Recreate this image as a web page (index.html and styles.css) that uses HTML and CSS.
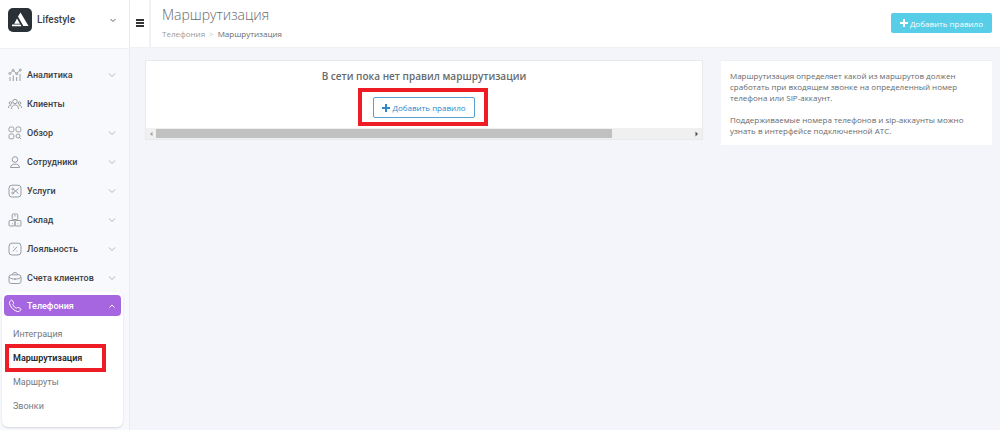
FILE: index.html
```html
<!DOCTYPE html>
<html lang="ru">
<head>
<meta charset="utf-8">
<meta name="viewport" content="width=device-width, initial-scale=1">
<title>Маршрутизация</title>
<link rel="stylesheet" href="styles.css">
</head>
<body>
<div class="app">
  <aside class="sidebar">
    <button class="account" type="button">
      <svg class="logo" viewBox="0 0 24 24"><rect width="24" height="24" rx="5" fill="#293036"/><path d="M12.500 4.500L20.500 18h-5.200L10 8.500z" fill="#fff"/><path d="M9 10.500L12 15.800H6.200zM4 16.600h8.500l1 1.600H4z" fill="#fff"/></svg>
      <span class="account-name">Lifestyle</span>
      <svg class="chevron" viewBox="0 0 8 8"><path d="M1.500 3L4 5.500L6.500 3"/></svg>
    </button>
    <nav class="menu">
      <a class="item" href="#"><svg class="icon" viewBox="0 0 14 14"><path d="M2 9v4M5.300 7.500V13M8.700 9v4M12 6v7M2.700 4.800L4.500 3M6 3.200L8 5.200M9.300 5L11.500 2.800"/><circle cx="1.800" cy="5.500" r="1"/><circle cx="5.200" cy="2.400" r="1"/><circle cx="8.700" cy="5.800" r="1"/><circle cx="12.300" cy="2" r="1"/></svg><span>Аналитика</span><svg class="chevron" viewBox="0 0 8 8"><path d="M1 2.500L4 5.500L7 2.500"/></svg></a>
      <a class="item" href="#"><svg class="icon" viewBox="0 0 14 14"><circle cx="7" cy="4.500" r="2.200"/><path d="M3.500 12c0-5.500 7-5.500 7 0"/><circle cx="2.500" cy="6" r="1.300"/><circle cx="11.500" cy="6" r="1.300"/><path d="M.5 11c0-2 1-3 2.800-2.700M13.500 11c0-2-1-3-2.800-2.700"/></svg><span>Клиенты</span></a>
      <a class="item" href="#"><svg class="icon" viewBox="0 0 14 14"><rect x="1" y="1" width="4.800" height="4.800" rx="1.500"/><rect x="8" y="1" width="4.800" height="4.800" rx="1.500"/><rect x="1" y="8" width="4.800" height="4.800" rx="1.500"/><circle cx="10" cy="10" r="2"/><path d="M11.500 11.500L13 13"/></svg><span>Обзор</span><svg class="chevron" viewBox="0 0 8 8"><path d="M1 2.500L4 5.500L7 2.500"/></svg></a>
      <a class="item" href="#"><svg class="icon" viewBox="0 0 14 14"><circle cx="7" cy="4.500" r="2.800"/><path d="M2.500 12.500c0-4.500 9-4.500 9 0z"/></svg><span>Сотрудники</span><svg class="chevron" viewBox="0 0 8 8"><path d="M1 2.500L4 5.500L7 2.500"/></svg></a>
      <a class="item" href="#"><svg class="icon" viewBox="0 0 14 14"><rect x="1" y="1.200" width="12" height="11.800" rx="3"/><circle cx="4.800" cy="5" r="1"/><circle cx="4.800" cy="9" r="1"/><path d="M5.700 8.500L10.500 4.500M5.700 5.500L10.500 9.500"/></svg><span>Услуги</span><svg class="chevron" viewBox="0 0 8 8"><path d="M1 2.500L4 5.500L7 2.500"/></svg></a>
      <a class="item" href="#"><svg class="icon" viewBox="0 0 14 14"><rect x="4.200" y="1" width="5.600" height="5.500" rx="1"/><rect x="1" y="7.500" width="6" height="5.500" rx="1"/><rect x="7" y="7.500" width="6" height="5.500" rx="1"/><path d="M7 2v1.500M4 10.800h1M9.500 10.800h1"/></svg><span>Склад</span><svg class="chevron" viewBox="0 0 8 8"><path d="M1 2.500L4 5.500L7 2.500"/></svg></a>
      <a class="item" href="#"><svg class="icon" viewBox="0 0 14 14"><rect x="1" y="1.200" width="12" height="11.800" rx="3"/><path d="M5 9.300L9 4.700M5 5h.8M8.500 9h.8"/></svg><span>Лояльность</span><svg class="chevron" viewBox="0 0 8 8"><path d="M1 2.500L4 5.500L7 2.500"/></svg></a>
      <a class="item" href="#"><svg class="icon" viewBox="0 0 14 14"><rect x="1" y="3.800" width="12" height="8.700" rx="2.200"/><path d="M4.300 3.800c0-3 5.400-3 5.400 0M1 6c2 2.200 4 2 6 2s4 .2 6-2M6 8h2"/></svg><span>Счета клиентов</span><svg class="chevron" viewBox="0 0 8 8"><path d="M1 2.500L4 5.500L7 2.500"/></svg></a>
    </nav>
    <div class="group">
      <button class="item group-head" type="button" aria-expanded="true"><svg class="icon" viewBox="0 0 14 14"><path d="M3.200 1.200L1.500 2.900C.8 7 7 13.200 11 12.600l1.800-1.800c.3-.4.200-.8-.2-1.100L10.300 8.400c-.8-.3-1.200.9-2 .7C6.700 8.500 5.500 7.200 4.900 5.800c-.2-.8 1-1.200.7-2L4.300 1.400c-.3-.5-.7-.5-1.100-.2z"/></svg><span>Телефония</span><svg class="chevron" viewBox="0 0 8 8"><path d="M1.500 5.500L4 3L6.500 5.500"/></svg></button>
      <a class="sub" href="#">Интеграция</a>
      <a class="sub current marked" href="#">Маршрутизация</a>
      <a class="sub" href="#">Маршруты</a>
      <a class="sub" href="#">Звонки</a>
    </div>
  </aside>
  <div class="content">
    <header class="topbar">
      <button class="burger" type="button" aria-label="Меню"><svg viewBox="0 0 8 8"><path d="M0 1h8M0 4h8M0 7h8"/></svg></button>
      <div class="heading">
        <h1>Маршрутизация</h1>
        <div class="crumbs"><a href="#">Телефония</a><span class="sep">&gt;</span><span class="here">Маршрутизация</span></div>
      </div>
      <button class="add solid" type="button"><svg viewBox="0 0 8 8"><path d="M4 0v8M0 4h8"/></svg>Добавить правило</button>
    </header>
    <main class="panels">
      <section class="rules">
        <h2>В сети пока нет правил маршрутизации</h2>
        <div class="action marked"><button class="add outline" type="button"><svg viewBox="0 0 8 8"><path d="M4 0v8M0 4h8"/></svg>Добавить правило</button></div>
        <div class="scroll">
          <svg viewBox="0 0 10 10"><path d="M6.500 2.800v4.400L4 5z" fill="#a3a3a3"/></svg>
          <div class="track"><div class="thumb"></div></div>
          <svg viewBox="0 0 10 10"><path d="M3.500 2.500v5L6 5z" fill="#505050"/></svg>
        </div>
      </section>
      <aside class="info">
        <p>Маршрутизация определяет какой из маршрутов должен сработать при входящем звонке на определенный номер телефона или SIP-аккаунт.</p>
        <p>Поддерживаемые номера телефонов и sip-аккаунты можно узнать в интерфейсе подключенной АТС.</p>
      </aside>
    </main>
  </div>
</div>
</body>
</html>
```
FILE: styles.css
```css
* { box-sizing: border-box; }
body { margin: 0; background: #f4f5fa; font-family: "Open Sans", sans-serif; color: #676a6c; }
button { font: inherit; border: 0; background: none; padding: 0; margin: 0; cursor: pointer; }
a { color: inherit; text-decoration: none; }
svg { flex: none; fill: none; stroke: currentColor; }

.app { display: flex; min-height: 100vh; }
.sidebar { flex: none; width: 130px; background: #f8f9fd; border-right: 1px solid #e9ebf0; font-family: Roboto, sans-serif; font-size: 9px; }
.account { display: flex; align-items: center; gap: 5px; width: 100%; height: 49px; padding: 0 12px 9px 8px; background: #fff; border-bottom: 1px solid #eff0f4; color: #3a4045; }
.logo { width: 24px; height: 24px; stroke: none; }
.account-name { flex: 1; text-align: left; font-size: 10px; font-weight: 500; }
.chevron { width: 8px; height: 8px; margin-left: auto; color: #b0b4b9; }
.account .chevron { color: #5d6266; }

.menu { padding: 11px 4px 0; }
.item { display: flex; align-items: center; gap: 5px; width: 100%; height: 29px; padding: 0 9px 0 4px; font-weight: 500; color: #3b4146; }
.icon { width: 14px; height: 14px; color: #989da1; }

.group { margin: 0 6px 4px 2px; padding: 3px 2px 9px; background: #fff; border-radius: 6px; box-shadow: 0 1px 2px #d5d7dc; }
.group-head { height: 21px; margin-bottom: 6px; padding: 0 5px 0 4px; background: #a566df; border-radius: 4px; color: #fff; }
.group-head .icon, .group-head .chevron { color: #fff; }
.sub { display: flex; align-items: center; height: 24px; padding-left: 9px; color: #747a80; }
.current { color: #22282d; font-weight: 600; }

.marked { position: relative; }
.marked::after { content: ""; position: absolute; border: 4px solid #ee1c25; pointer-events: none; }
.sub.marked::after { inset: -2px 15px -2px 1px; }
.action.marked::after { inset: -9px -13px -8px -15px; }

.content { flex: 1; min-width: 0; }
.topbar { display: flex; height: 48px; background: #fff; border-bottom: 1px solid #f0f1f5; }
.burger { width: 21px; padding-bottom: 6px; border-right: 2px solid #f0f1f4; color: #343434; }
.burger svg { width: 8px; height: 8px; stroke-width: 2; }
.heading { flex: 1; padding: 5px 11px; }
h1 { margin: 0; font-size: 14px; line-height: 20px; font-weight: 300; }
.crumbs { display: flex; gap: 4px; font-size: 8px; line-height: 17px; color: #999b9d; }
.sep { color: #c8c8c8; }
.here { color: #676a6c; }

.add { display: flex; align-items: center; justify-content: center; gap: 2px; height: 20px; padding: 0 9px; font-size: 8px; border-radius: 2px; white-space: nowrap; }
.add svg { width: 8px; height: 8px; stroke-width: 2; }
.solid { margin: 13px 8px 0 0; background: #58cde7; color: #fff; }
.outline { border: 1px solid #5b9fd0; color: #2f88ca; height: 21px; padding: 0 8px; background: #fff; }

.panels { display: grid; grid-template-columns: 1fr 32%; gap: 18px; align-items: start; padding: 12px 8px 0 15px; }
.rules { display: flex; flex-direction: column; align-items: center; background: #fff; border: 1px solid #e9eaed; }
h2 { margin: 6px 0 12px; font-size: 10px; line-height: 18px; font-weight: 600; }
.scroll { display: flex; align-items: center; width: 100%; height: 11px; margin-top: 10px; background: #f0f0f0; }
.scroll svg { width: 10px; height: 10px; stroke: none; }
.track { flex: 1; height: 9px; }
.thumb { width: 85%; height: 100%; background: #c1c1c1; }
.info { background: #fff; border-top: 1px solid #eeeff3; padding: 9px; font-size: 8px; line-height: 11px; }
.info p { margin: 0; }
.info p + p { margin-top: 11px; }
```
